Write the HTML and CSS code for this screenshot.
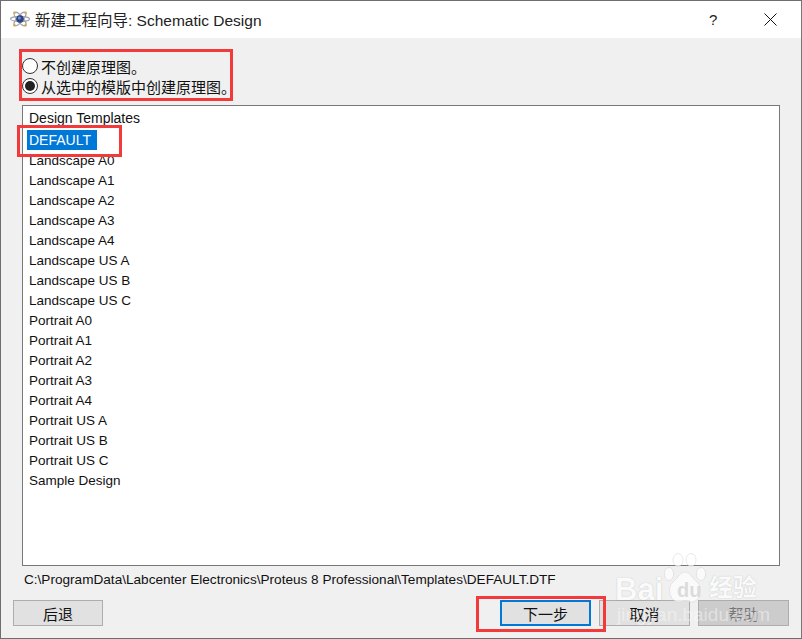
FILE: index.html
```html
<!DOCTYPE html>
<html lang="zh">
<head>
<meta charset="utf-8">
<title>新建工程向导</title>
<link rel="stylesheet" href="styles.css">
</head>
<body>
<div class="window">
  <header class="titlebar">
    <svg class="app-icon" width="20" height="16" viewBox="0 0 20 16">
      <g fill="none" stroke="#a4a4b0" stroke-width="1.1">
        <ellipse cx="10" cy="8" rx="9.5" ry="2.6"/>
        <ellipse cx="10" cy="8" rx="8.5" ry="3" transform="rotate(50 10 8)"/>
        <ellipse cx="10" cy="8" rx="8.5" ry="3" transform="rotate(-50 10 8)"/>
      </g>
      <g fill="#d9a441">
        <circle cx="4.5" cy="1.8" r="1.2"/>
        <circle cx="15.5" cy="1.8" r="1.2"/>
        <circle cx="4.5" cy="14.2" r="1.2"/>
        <circle cx="15.5" cy="14.2" r="1.2"/>
      </g>
      <circle cx="10" cy="8" r="3.8" fill="#2b4682"/>
      <circle cx="9.4" cy="7" r="1.5" fill="#6f93cf"/>
    </svg>
    <span class="title">新建工程向导: Schematic Design</span>
    <span class="help-btn">?</span>
    <svg class="close-btn" width="13" height="13" viewBox="0 0 13 13"><path d="M.5.5l12 12M12.5.5l-12 12" stroke="#111" fill="none"/></svg>
  </header>
  <main class="content">
    <div class="radios">
      <label class="radio"><span class="dot"></span>不创建原理图。</label>
      <label class="radio"><span class="dot on"></span>从选中的模版中创建原理图。</label>
    </div>
    <div class="listbox">
      <div class="group">Design Templates</div>
      <div class="item selected"><span>DEFAULT</span></div>
      <div class="item">Landscape A0</div>
      <div class="item">Landscape A1</div>
      <div class="item">Landscape A2</div>
      <div class="item">Landscape A3</div>
      <div class="item">Landscape A4</div>
      <div class="item">Landscape US A</div>
      <div class="item">Landscape US B</div>
      <div class="item">Landscape US C</div>
      <div class="item">Portrait A0</div>
      <div class="item">Portrait A1</div>
      <div class="item">Portrait A2</div>
      <div class="item">Portrait A3</div>
      <div class="item">Portrait A4</div>
      <div class="item">Portrait US A</div>
      <div class="item">Portrait US B</div>
      <div class="item">Portrait US C</div>
      <div class="item">Sample Design</div>
    </div>
    <div class="path">C:\ProgramData\Labcenter Electronics\Proteus 8 Professional\Templates\DEFAULT.DTF</div>
    <footer class="buttons">
      <button class="btn">后退</button>
      <span class="spacer"></span>
      <button class="btn primary">下一步</button>
      <button class="btn">取消</button>
      <button class="btn disabled">帮助</button>
    </footer>
  </main>
  <div class="mark mark-radios"></div>
  <div class="mark mark-default"></div>
  <div class="mark mark-next"></div>
  <div class="watermark">
    <svg class="paw" width="44" height="50" viewBox="0 0 44 50" fill="#fff" stroke="#cfcfcf" stroke-width=".6">
      <ellipse cx="6" cy="21" rx="4.6" ry="6.5"/>
      <ellipse cx="15" cy="7" rx="5" ry="6.5"/>
      <ellipse cx="28" cy="7" rx="5" ry="6.5"/>
      <ellipse cx="38" cy="21" rx="4.6" ry="6.5"/>
      <path d="M22 19c-5 0-7 6-12 10-6 5-4 20 6 20 3 0 4-1 6-1s3 1 6 1c10 0 12-15 6-20-5-4-7-10-12-10z"/>
    </svg>
    <span class="wm-bai">Bai</span><span class="wm-du">du</span><span class="wm-jy">经验</span>
    <span class="wm-url">jingyan.baidu.com</span>
  </div>
</div>
</body>
</html>
```
FILE: styles.css
```css
* { box-sizing: border-box; }
html, body { margin: 0; padding: 0; }
body {
  width: 802px;
  height: 639px;
  overflow: hidden;
  font-family: "Liberation Sans", "Noto Sans CJK SC", sans-serif;
  font-size: 14px;
  color: #111;
}
.window {
  position: relative;
  width: 802px;
  height: 639px;
  border: 1px solid #6e6e6e;
  border-right-color: #777;
  background: #f0f0f0;
  display: flex;
  flex-direction: column;
}
.titlebar {
  height: 37px;
  flex: none;
  background: #fff;
  display: flex;
  align-items: center;
  padding: 0 0 1px 9px;
}
.app-icon { margin-right: 5px; }
.title { font-size: 15.5px; flex: 1; color: #222; }
.help-btn { font-size: 15px; width: 9px; margin-right: 46px; color: #222; }
.close-btn { margin-right: 24px; }
.content {
  flex: 1;
  display: flex;
  flex-direction: column;
  padding: 18px 12px 0 12px;
  min-height: 0;
}
.radios {
  display: flex;
  flex-direction: column;
  padding-left: 9px;
  font-size: 15px;
}
.radio {
  display: flex;
  align-items: center;
  height: 20px;
  gap: 3px;
}
.dot {
  width: 16px;
  height: 16px;
  border-radius: 50%;
  border: 1px solid #333;
  background: #fff;
  flex: none;
  display: flex;
  align-items: center;
  justify-content: center;
}
.dot.on::after {
  content: "";
  width: 10px;
  height: 10px;
  border-radius: 50%;
  background: #222;
}
.listbox {
  margin: 9px 9px 0 9px;
  height: 461px;
  flex: none;
  background: #fff;
  border: 1px solid #777;
  padding: 2px 0 0 6px;
  line-height: 20px;
  font-size: 13.5px;
}
.group { height: 20px; font-size: 14px; }
.item { height: 20px; }
.item.selected { height: 23px; padding: 2px 0 0; line-height: 20px; margin-left: -2px; font-size: 14px; }
.item.selected span {
  display: inline-block;
  background: #0078d7;
  color: #fff;
  padding: 0 5px 0 2px;
  width: 70px;
}
.path {
  margin: 6px 0 0 11px;
  height: 16px;
  line-height: 16px;
  font-size: 13.6px;
  color: #111;
}
.buttons {
  display: flex;
  align-items: center;
  margin-top: 12px;
}
.spacer { flex: 1; }
.btn {
  width: 91px;
  height: 26px;
  background: #e1e1e1;
  border: 1px solid #adadad;
  font: inherit;
  font-size: 15px;
  color: #111;
  padding: 0;
  margin-left: 8px;
}
.btn:first-child { margin-left: 0; width: 90px; }
.btn.primary { border: 2px solid #0078d7; }
.btn.disabled { background: #ccc; color: #777; }
.mark {
  position: absolute;
  border: 3px solid #f33a3a;
  pointer-events: none;
}
.mark-radios { left: 18px; top: 48px; width: 214px; height: 52px; }
.mark-default { left: 16px; top: 124px; width: 105px; height: 32px; }
.mark-next { left: 475px; top: 595px; width: 130px; height: 36px; }
.watermark {
  position: absolute;
  left: 600px;
  top: 548px;
  width: 200px;
  height: 90px;
  opacity: .72;
  color: #fff;
  font-weight: 700;
  text-shadow: 0 0 1px rgba(0, 0, 0, .35);
}
.paw { position: absolute; left: 62px; top: 4px; }
.wm-bai { position: absolute; left: 14px; top: 23px; font-size: 31px; line-height: 36px; }
.wm-du { position: absolute; left: 76px; top: 27px; font-size: 20px; line-height: 28px; color: #d4d4d4; text-shadow: none; }
.wm-jy { position: absolute; left: 108px; top: 24px; font-size: 24px; line-height: 30px; }
.wm-url { position: absolute; left: 16px; top: 55px; font-size: 19px; line-height: 22px; font-weight: 400; white-space: nowrap; color: rgba(255, 255, 255, .6); text-shadow: none; }
```
